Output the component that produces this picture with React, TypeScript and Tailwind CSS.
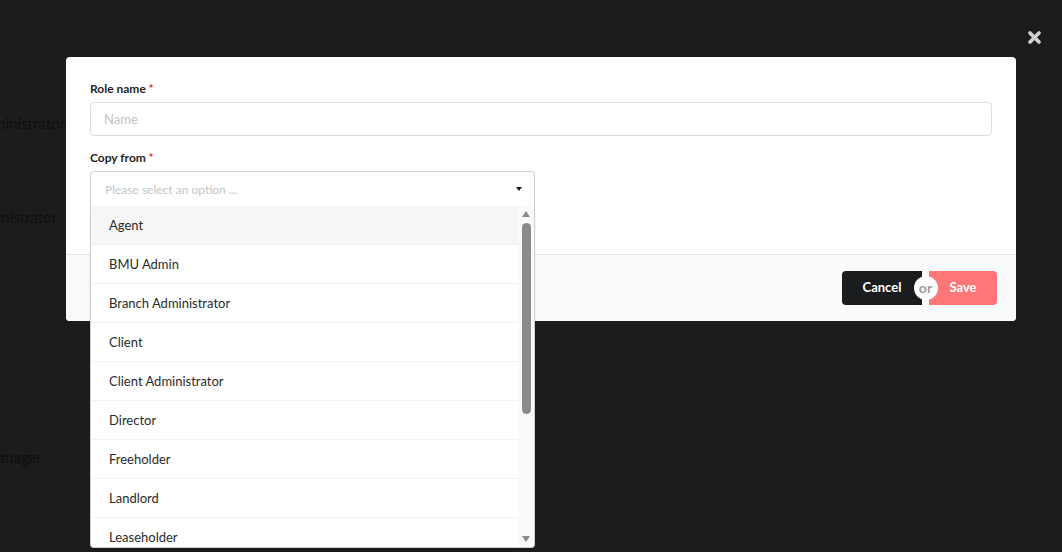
import React from "react"

const options = [
  "Agent",
  "BMU Admin",
  "Branch Administrator",
  "Client",
  "Client Administrator",
  "Director",
  "Freeholder",
  "Landlord",
  "Leaseholder",
]

function Backdrop() {
  return (
    <div className="flex flex-col text-[15px] leading-[20px] text-[#0f0f0f]">
      <div className="mt-[113px] flex w-[65px] justify-end overflow-hidden whitespace-nowrap">Administrator</div>
      <div className="mt-[74px] flex w-[57px] justify-end overflow-hidden whitespace-nowrap">Administrator</div>
      <div className="mt-[220px] flex w-[42px] justify-end overflow-hidden whitespace-nowrap">Manager</div>
    </div>
  )
}

function Label({ children }: { children: React.ReactNode }) {
  return (
    <div className="mb-[6px] flex items-start text-[12px] font-bold leading-[15px] text-[#1f1f1f]">
      {children}
      <span className="ml-[3px] mt-[2px] text-[11px] leading-[11px] text-[#db2828]">*</span>
    </div>
  )
}

function CopyFromSelect() {
  return (
    <div className="relative w-[445px]">
      <div className="flex h-[35px] items-center justify-between rounded-t-[4px] border border-b-0 border-[#cfcfcf] pl-[14px] pr-[12px]">
        <span className="pt-[1px] text-[12px] text-[#c4c4c4]">Please select an option ...</span>
        <span className="h-0 w-0 border-x-[3.5px] border-t-[4px] border-x-transparent border-t-[#1b1b1b]" />
      </div>
      <div className="absolute left-0 top-[35px] z-10 flex h-[342px] w-[445px] overflow-hidden rounded-b-[4px] border border-t-0 border-[#cfcfcf] bg-white shadow-[0_2px_3px_rgba(0,0,0,0.08)]">
        <div className="flex flex-1 flex-col">
          {options.map((o, i) => (
            <div
              key={o}
              className={
                "flex h-[39px] shrink-0 items-center border-b border-[#f2f2f2] pl-[18px] pt-[2px] text-[13px] text-[#2b2b2b] " +
                (i === 0 ? "bg-[#f6f6f6]" : "bg-white")
              }
            >
              {o}
            </div>
          ))}
        </div>
        <div className="flex w-[16px] flex-col items-center bg-[#fafafa] pt-[5px]">
          <span className="h-0 w-0 border-x-[4px] border-b-[6px] border-x-transparent border-b-[#8a8a8a]" />
          <div className="mt-[6px] h-[191px] w-[9px] rounded-full bg-[#8a8a8a]" />
          <div className="flex-1" />
          <span className="mb-[5px] h-0 w-0 border-x-[4px] border-t-[6px] border-x-transparent border-t-[#8a8a8a]" />
        </div>
      </div>
    </div>
  )
}

function Modal() {
  return (
    <div className="absolute left-[66px] top-[57px] w-[950px] overflow-visible rounded-[4px] bg-white">
      <div className="px-[24px] pb-[48px] pt-[24px]">
        <Label>Role name</Label>
        <div className="flex h-[34px] items-center rounded-[4px] border border-[#dedede] pl-[13px] pt-[1px] text-[13px] text-[#c4c4c4]">
          Name
        </div>
        <div className="mt-[14px]">
          <Label>Copy from</Label>
          <CopyFromSelect />
        </div>
      </div>
      <div className="flex justify-end rounded-b-[4px] border-t border-[#e2e2e2] bg-[#f9fafb] py-[16px] pr-[19px]">
        <div className="flex h-[34px]">
          <button className="w-[80px] rounded-l-[4px] bg-[#1b1c1d] text-[13px] font-bold text-white">Cancel</button>
          <div className="relative w-[7px]">
            <span className="absolute left-1/2 top-1/2 z-10 flex h-[24px] w-[24px] -translate-x-1/2 -translate-y-1/2 items-center justify-center rounded-full bg-white text-[14px] font-bold leading-none text-[#a0a0a0]">
              or
            </span>
          </div>
          <button className="w-[68px] rounded-r-[4px] bg-[#ff7676] text-[13px] font-bold text-white">Save</button>
        </div>
      </div>
    </div>
  )
}

export default function App() {
  return (
    <div
      className="relative h-[552px] w-[1062px] overflow-hidden bg-[#1c1c1c]"
      style={{ fontFamily: "Lato, 'Noto Sans', sans-serif" }}
    >
      <Backdrop />
      <Modal />
      <button className="absolute right-[20px] top-[30px] flex h-[15px] w-[15px] items-center justify-center">
        <svg viewBox="0 0 16 16" width="15" height="15">
          <path d="M3.2 3.2 L12.8 12.8 M12.8 3.2 L3.2 12.8" stroke="#d0d0d0" strokeWidth="4" strokeLinecap="round" />
        </svg>
      </button>
    </div>
  )
}
